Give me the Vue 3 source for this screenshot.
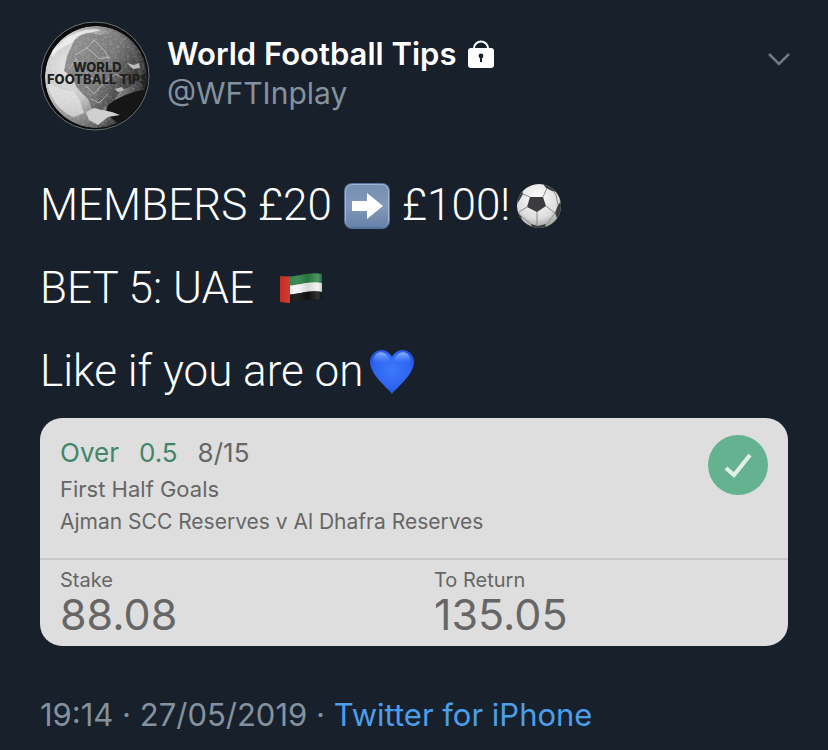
<template>
  <article class="tweet">
    <header class="tweet-header">
      <svg class="avatar" viewBox="0 0 110 110" role="img" aria-label="World Football Tips">
        <defs>
          <radialGradient id="globe" cx="0.25" cy="0.4" r="0.8">
            <stop offset="0" stop-color="#e6e6e6" />
            <stop offset="0.4" stop-color="#c6c6c6" />
            <stop offset="0.75" stop-color="#6c6c6c" />
            <stop offset="1" stop-color="#0c0c0c" />
          </radialGradient>
          <linearGradient id="land" x1="0" y1="0" x2="1" y2="0.6">
            <stop offset="0" stop-color="#969696" />
            <stop offset="0.6" stop-color="#787878" />
            <stop offset="1" stop-color="#2c2c2c" />
          </linearGradient>
          <clipPath id="globeClip"><circle cx="56" cy="56" r="51" /></clipPath>
          <filter id="grain" x="0" y="0" width="1" height="1">
            <feTurbulence type="fractalNoise" baseFrequency="0.4" numOctaves="3" seed="4" />
            <feColorMatrix values="0 0 0 0 1  0 0 0 0 1  0 0 0 0 1  2.4 0 0 0 -1.05" />
          </filter>
        </defs>
        <circle cx="55" cy="55" r="54" fill="#0b0c0e" stroke="#6d7277" />
        <g clip-path="url(#globeClip)">
          <circle cx="56" cy="56" r="51" fill="url(#globe)" />
          <path d="M35 18 46 11 60 14 73 12 88 24 96 38 99 55 91 65 80 70 74 80 64 87 60 96 52 88 48 78 37 67 32 56 24 50 27 35Z" fill="url(#land)" />
          <path d="M12 30Q22 18 38 16L30 23Q20 26 12 36ZM22 20Q42 5 62 9L48 12Q36 14 26 24Z" fill="#f2f2f2" opacity="0.8" />
          <path d="M7 60Q20 70 34 70L40 80 44 92 34 96Q12 88 7 60Z" fill="#e2e2e2" opacity="0.7" />
          <rect width="110" height="110" filter="url(#grain)" opacity="0.2" />
          <path d="M68 84Q82 72 108 68L98 92 80 104 70 96Q64 90 68 84Z" fill="#161616" />
          <path d="M46 91 54 87 62 89 72 91 80 94 68 96 58 104 49 99Z" fill="#cfcfcf" />
          <path d="M75 68 82 66 84 69 78 71ZM87 42 94 44 99 42 100 47 93 48Z" fill="#d6d6d6" opacity="0.8" />
          <path d="M35 34 47 27 54 19 64 29 69 38M29 48 36 38 51 57 63 63 54 73 46 65M63 63 75 53 85 58M51 78 59 82 68 73M47 27 60 38 70 36" fill="none" stroke="#d5d5d5" opacity="0.6" />
        </g>
        <text x="33" y="51" class="avatar-text">WORLD</text>
        <text x="7" y="63" class="avatar-text">FOOTBALL TIPS</text>
      </svg>

      <div class="author">
        <div class="author-name">
          <span>World Football Tips</span>
          <svg class="lock" viewBox="0 0 28 28" role="img" aria-label="Protected account">
            <path d="M7 10V8a7 6.5 0 0 1 14 0v2" fill="none" stroke="#fff" stroke-width="2" />
            <rect x="1" y="8" width="26" height="20" rx="3" fill="#fff" />
            <circle cx="14" cy="16" r="2.4" fill="#18202b" />
            <path d="M13 17h2v5h-2z" fill="#18202b" />
          </svg>
        </div>
        <div class="author-handle">@WFTInplay</div>
      </div>

      <button class="menu-btn" aria-label="More">
        <svg viewBox="0 0 24 16"><path d="M2 3 12 13 22 3" fill="none" stroke="#6f7a86" stroke-width="2.5" /></svg>
      </button>
    </header>

    <div class="tweet-body">
      <p>
        <span>MEMBERS £20</span>
        <svg class="emoji arrow" viewBox="0 0 46 46" role="img" aria-label="Right arrow">
          <defs>
            <linearGradient id="tile" x1="0" y1="0" x2="0" y2="1">
              <stop offset="0" stop-color="#7590b4" />
              <stop offset="0.5" stop-color="#8299b9" />
              <stop offset="1" stop-color="#6782a8" />
            </linearGradient>
          </defs>
          <rect width="46" height="46" rx="8" fill="#577399" />
          <rect x="1" y="1" width="44" height="43" rx="7" fill="#a0b6d2" />
          <rect x="2" y="2" width="42" height="42" rx="6" fill="url(#tile)" />
          <path d="M8 18h15v-8l16 13-16 13v-8H8z" fill="#fff" />
        </svg>
        <span>£100!</span>
        <svg class="emoji ball" viewBox="0 0 46 46" role="img" aria-label="Football">
          <defs>
            <radialGradient id="leather" cx="0.45" cy="0.3" r="0.75">
              <stop offset="0" stop-color="#fff" />
              <stop offset="0.65" stop-color="#dcdcdc" />
              <stop offset="1" stop-color="#929292" />
            </radialGradient>
            <clipPath id="ballClip"><circle cx="23" cy="23" r="22" /></clipPath>
          </defs>
          <circle cx="23" cy="23" r="22" fill="url(#leather)" />
          <g clip-path="url(#ballClip)">
            <path d="M14 14 27 14 30 23 21 29 11 24Z" fill="#3c3c3e" />
            <path d="M27 1 33 2 41 9 36 8 30 5ZM0 14 6 8 7 11 3 18 0 22ZM42 22 46 17V31L41 35 39 30ZM15 41 22 43 30 41 28 46H16ZM1 28 5 33 7 40 0 37Z" fill="#3c3c3e" />
            <path d="M14 14 7 11M27 14 31 5M30 23 39 30M21 29 21 42M11 24 3 29M39 30 31 41M5 33 15 41M42 22 40 12 37 8" fill="none" stroke="#8b8b8b" />
          </g>
        </svg>
      </p>
      <p>
        <span>BET 5: UAE</span>
        <svg class="emoji flag" viewBox="0 0 46 46" role="img" aria-label="Flag of the United Arab Emirates">
          <defs>
            <linearGradient id="fold" x1="0" y1="0" x2="1" y2="0">
              <stop offset="0" stop-color="#000" stop-opacity="0.1" />
              <stop offset="0.4" stop-color="#fff" stop-opacity="0.08" />
              <stop offset="0.65" stop-color="#000" stop-opacity="0.12" />
              <stop offset="0.9" stop-color="#fff" stop-opacity="0.15" />
              <stop offset="1" stop-color="#000" stop-opacity="0.2" />
            </linearGradient>
          </defs>
          <path d="M2 10C18 13 28 5 44 8V18C28 15 18 23 2 20Z" fill="#2d8348" />
          <path d="M2 19C18 22 28 14 44 17V26C28 23 18 31 2 28Z" fill="#f4f4f4" />
          <path d="M2 28C18 31 28 23 44 26V34C28 31 18 39 2 36Z" fill="#111" />
          <path d="M2 10Q7 11 12 10V37Q7 37 2 36Z" fill="#d83227" />
          <path d="M2 10C18 13 28 5 44 8V34C28 31 18 39 2 36Z" fill="url(#fold)" />
        </svg>
      </p>
      <p>
        <span>Like if you are on</span>
        <svg class="emoji heart" viewBox="0 0 46 46" role="img" aria-label="Blue heart">
          <defs>
            <radialGradient id="heartFill" cx="0.5" cy="0.45" r="0.6">
              <stop offset="0" stop-color="#3c78fb" />
              <stop offset="0.65" stop-color="#2f66f3" />
              <stop offset="1" stop-color="#204bd9" />
            </radialGradient>
            <linearGradient id="shine" x1="0" y1="0" x2="0" y2="1">
              <stop offset="0" stop-color="#a9c9ff" stop-opacity="0.8" />
              <stop offset="1" stop-color="#6697ff" stop-opacity="0" />
            </linearGradient>
          </defs>
          <path d="M23 45C20 40 1 26 1 13 1 6 6 1 12 1 17 1 21 4 23 8 25 4 29 1 34 1 40 1 45 6 45 13 45 26 26 40 23 45Z" fill="url(#heartFill)" />
          <path d="M4 14C4 0 18 0 21 12 16 14 9 14 4 14ZM25 12C28 0 42 0 42 14 37 14 30 14 25 12Z" fill="url(#shine)" />
        </svg>
      </p>
    </div>

    <section class="bet-card">
      <div class="bet-main">
        <div class="bet-info">
          <div class="bet-pick">
            <span class="pick">Over</span>
            <span class="pick">0.5</span>
            <span>8/15</span>
          </div>
          <div class="bet-market">First Half Goals</div>
          <div class="bet-match">Ajman SCC Reserves v Al Dhafra Reserves</div>
        </div>
        <svg class="bet-won" viewBox="0 0 60 60" role="img" aria-label="Won">
          <circle cx="30" cy="30" r="30" fill="#65b291" />
          <path d="M18 33 26 40 42 20" fill="none" stroke="#e2efe9" stroke-width="4" />
        </svg>
      </div>
      <dl class="bet-totals">
        <div v-for="total in totals" :key="total.label">
          <dt>{{ total.label }}</dt>
          <dd>{{ total.value }}</dd>
        </div>
      </dl>
    </section>

    <footer class="tweet-meta">
      <time datetime="2019-05-27T19:14">19:14 · 27/05/2019</time> · <a href="#">Twitter for iPhone</a>
    </footer>
  </article>
</template>

<script setup>
const totals = [
  { label: 'Stake', value: '88.08' },
  { label: 'To Return', value: '135.05' }
]
</script>

<style>
body {
  background: #18202b;
}
</style>

<style scoped>
.tweet {
  box-sizing: border-box;
  padding: 21px 40px 14px;
  background: #18202b;
  color: #fff;
  font-family: Inter, 'Liberation Sans', sans-serif;
}

.tweet-header {
  display: flex;
  align-items: flex-start;
  gap: 17px;
}

.avatar {
  width: 110px;
  height: 110px;
  flex: none;
}

.avatar-text {
  font-size: 13px;
  font-weight: 800;
  fill: #202020;
}

.author {
  flex: 1;
  padding-top: 13px;
}

.author-name {
  display: flex;
  align-items: center;
  gap: 11px;
  font-size: 31px;
  font-weight: 600;
  line-height: 40px;
}

.lock {
  width: 28px;
  height: 28px;
}

.author-handle {
  color: #8492a0;
  font-size: 30px;
  line-height: 38px;
}

.menu-btn {
  display: flex;
  margin-top: 30px;
  margin-right: -3px;
  padding: 0;
  border: none;
  background: transparent;
  cursor: pointer;
}

.menu-btn svg {
  width: 24px;
  height: 16px;
}

.tweet-body {
  margin-top: 33px;
}

.tweet-body p {
  display: flex;
  align-items: center;
  margin: 0;
  font-family: Roboto, Inter, sans-serif;
  font-size: 44px;
  font-weight: 300;
  line-height: 83px;
}

.emoji {
  width: 46px;
  height: 46px;
  flex: none;
}

.arrow {
  margin: 0 12px;
}

.ball {
  margin-left: 6px;
}

.flag {
  margin-left: 24px;
}

.heart {
  margin-left: 6px;
}

.bet-card {
  margin-top: 5px;
  border-radius: 22px;
  background: #dedede;
  color: #666;
}

.bet-main {
  display: flex;
  justify-content: space-between;
  padding: 17px 20px 21px;
  border-bottom: 2px solid #c8c8c8;
}

.bet-pick {
  display: flex;
  gap: 20px;
  font-size: 26px;
  line-height: 36px;
}

.pick {
  color: #3f8768;
}

.bet-market {
  font-size: 22px;
  line-height: 36px;
}

.bet-match {
  font-size: 21px;
  line-height: 30px;
}

.bet-won {
  width: 60px;
  height: 60px;
  flex: none;
}

.bet-totals {
  display: grid;
  grid-template-columns: 1fr 1fr;
  margin: 0;
  padding: 7px 0 11px;
}

.bet-totals div {
  padding-left: 20px;
}

.bet-totals dt {
  font-size: 20px;
  line-height: 26px;
}

.bet-totals dd {
  margin: 0;
  font-size: 43px;
  line-height: 42px;
}

.tweet-meta {
  margin-top: 49px;
  color: #8492a0;
  font-size: 31px;
  line-height: 40px;
}

.tweet-meta a {
  color: #4c9eeb;
  text-decoration: none;
}
</style>
